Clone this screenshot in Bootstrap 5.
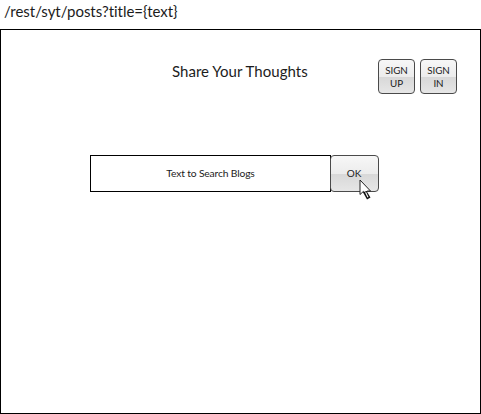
<!DOCTYPE html>
<html lang="en">
<head>
<meta charset="utf-8">
<meta name="viewport" content="width=device-width, initial-scale=1">
<title>Share Your Thoughts</title>
<link href="https://cdn.jsdelivr.net/npm/bootstrap@5.3.0/dist/css/bootstrap.min.css" rel="stylesheet">
<style>
body { font-family: Lato, "Noto Sans", sans-serif; font-variant-ligatures: none; color: #1c1c1c; height: 414px; }
.path-line { height: 29px; padding: 2px 0 0 4px; font-size: 15px; line-height: 19px; letter-spacing: -.03px; white-space: nowrap; }
.frame { border: 1px solid #000; }
.top-bar { padding: 29px 23px 0 171px; }
.page-title { font-size: 15px; line-height: 24px; letter-spacing: .03px; font-weight: 400; white-space: nowrap; }
.account-links { gap: 5px; }
.btn-glossy { border: 1px solid #4a4a4a; border-radius: 4px; color: #1c1c1c; font-size: 10px; line-height: 13px; padding: 0; background: linear-gradient(#f7f7f7, #ececec 50%, #d8d8d8 52%, #e6e6e6); }
.btn-account { width: 37px; height: 35px; font-size: 9.8px; }
.search-row { margin: 61px 0 0 89px; }
.search-field { width: 241px; height: 37px; border: 1px solid #000; font-size: 10.3px; letter-spacing: -.15px; }
.btn-ok { width: 49px; height: 37px; padding-right: 1px; }
.ok-wrap { margin-left: -1px; }
.pointer { left: 29px; top: 24px; }
</style>
<script src="https://cdn.jsdelivr.net/npm/bootstrap@5.3.0/dist/js/bootstrap.bundle.min.js"></script>
</head>
<body class="d-flex flex-column bg-white overflow-hidden m-0">
  <div class="path-line"><span>/rest/syt/posts?title={text}</span></div>
  <main class="frame flex-grow-1">
    <header class="top-bar d-flex justify-content-between align-items-start">
      <h1 class="page-title m-0"><span>Share Your Thoughts</span></h1>
      <div class="account-links d-flex">
        <button type="button" class="btn btn-glossy btn-account">SIGN<br>UP</button>
        <button type="button" class="btn btn-glossy btn-account">SIGN<br>IN</button>
      </div>
    </header>
    <div class="search-row d-flex">
      <div class="search-field d-flex align-items-center justify-content-center"><span>Text to Search Blogs</span></div>
      <div class="ok-wrap position-relative">
        <button type="button" class="btn btn-glossy btn-ok">OK</button>
        <svg class="pointer position-absolute" width="14" height="22" viewBox="0 0 14 22" aria-hidden="true">
          <path d="M1 1V15.5L4.4 12.4L5.5 14.8L8.2 12H11.5Z" fill="#fff" stroke="#222" stroke-width="1"/>
          <path d="M4 13.3L7.5 12L11.5 18.5L8 20.5Z" fill="#111"/>
          <path d="M6.6 13.2L9 18.2" fill="none" stroke="#fff" stroke-width="1.1"/>
        </svg>
      </div>
    </div>
  </main>
</body>
</html>
